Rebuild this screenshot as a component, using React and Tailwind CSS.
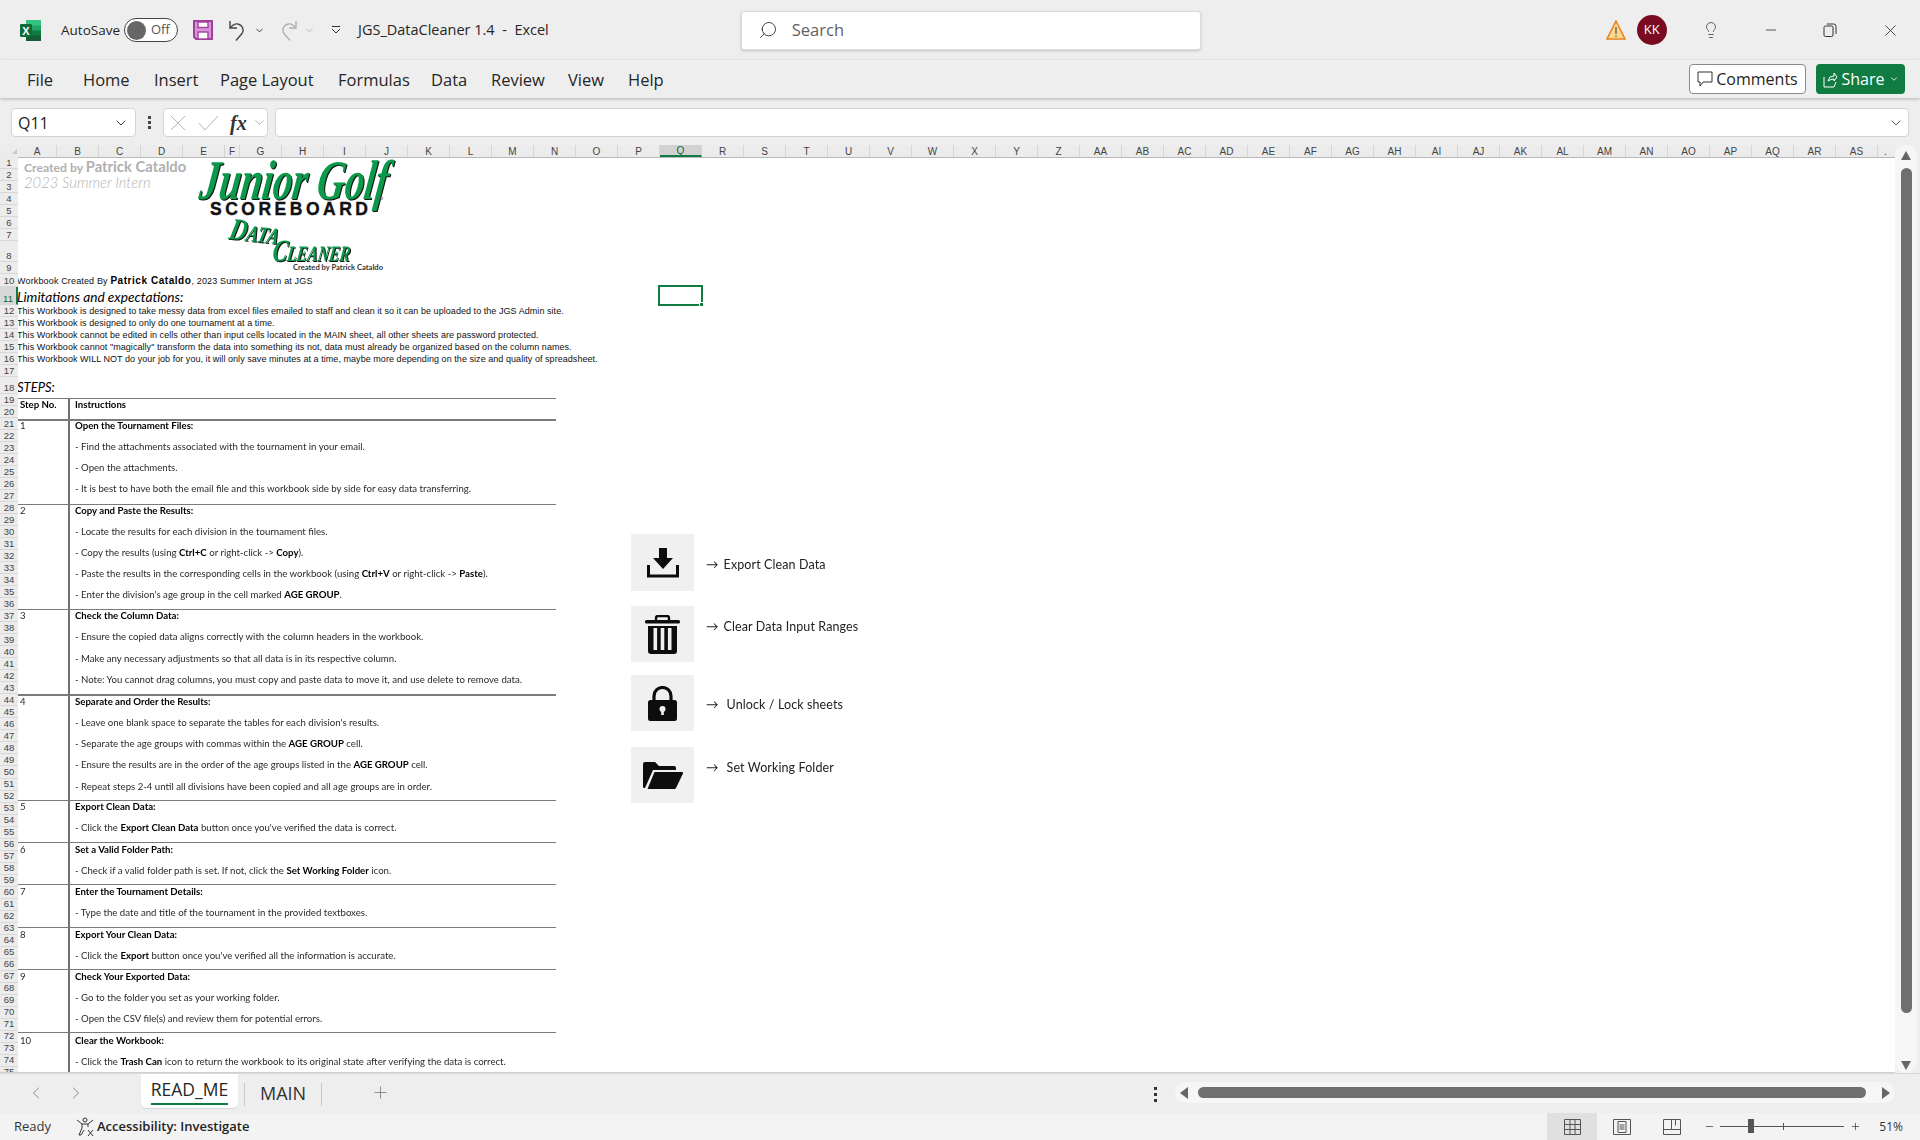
import { Search, ChevronDown, ChevronLeft, ChevronRight, X, Lightbulb, Minus, Plus } from "lucide-react";

const ui = "font-['Open_Sans',sans-serif]";

const tabs = [
  ["File", "w-[56px]"],
  ["Home", "w-[71px]"],
  ["Insert", "w-[66px]"],
  ["Page Layout", "w-[118px]"],
  ["Formulas", "w-[93px]"],
  ["Data", "w-[60px]"],
  ["Review", "w-[77px]"],
  ["View", "w-[60px]"],
  ["Help", "w-[60px]"],
];

const letters = "ABCDEFGHIJKLMNOPQRSTUVWXYZ".split("");
const columns = [
  ...letters,
  ...letters.slice(0, 19).map((l) => "A" + l),
];

const rowHeight = (n) => {
  if (n === 8) return "h-[21px]";
  if (n === 10) return "h-[13px]";
  if (n === 11) return "h-[18px]";
  if (n === 18) return "h-[17px]";
  if (n > 18) return "h-[12.03px]";
  return "h-[12px]";
};

const limits = [
  "This Workbook is designed to take messy data from excel files emailed to staff and clean it so it can be uploaded to the JGS Admin site.",
  "This Workbook is designed to only do one tournament at a time.",
  "This Workbook cannot be edited in cells other than input cells located in the MAIN sheet, all other sheets are password protected.",
  'This Workbook cannot "magically" transform the data into something its not, data must already be organized based on the column names.',
  "This Workbook WILL NOT do your job for you, it will only save minutes at a time, maybe more depending on the size and quality of spreadsheet.",
];

const B = ({ children }) => <b className="font-bold text-black">{children}</b>;

const steps = [
  {
    no: 1,
    h: "h-[84.6px]",
    border: "border-t-2",
    shift: "-translate-y-[2px]",
    lines: [
      <B>Open the Tournament Files:</B>,
      "- Find the attachments associated with the tournament in your email.",
      "- Open the attachments.",
      "- It is best to have both the email file and this workbook side by side for easy data transferring.",
    ],
  },
  {
    no: 2,
    h: "h-[105.75px]",
    border: "border-t",
    shift: "-translate-y-[1px]",
    lines: [
      <B>Copy and Paste the Results:</B>,
      "- Locate the results for each division in the tournament files.",
      <>- Copy the results (using <B>Ctrl+C</B> or right-click -&gt; <B>Copy</B>).</>,
      <>- Paste the results in the corresponding cells in the workbook (using <B>Ctrl+V</B> or right-click -&gt; <B>Paste</B>).</>,
      <>- Enter the division's age group in the cell marked <B>AGE GROUP</B>.</>,
    ],
  },
  {
    no: 3,
    h: "h-[84.6px]",
    border: "border-t",
    shift: "-translate-y-[1px]",
    lines: [
      <B>Check the Column Data:</B>,
      "- Ensure the copied data aligns correctly with the column headers in the workbook.",
      "- Make any necessary adjustments so that all data is in its respective column.",
      "- Note: You cannot drag columns, you must copy and paste data to move it, and use delete to remove data.",
    ],
  },
  {
    no: 4,
    h: "h-[105.75px]",
    border: "border-t-2",
    shift: "-translate-y-[1px]",
    lines: [
      <B>Separate and Order the Results:</B>,
      "- Leave one blank space to separate the tables for each division's results.",
      <>- Separate the age groups with commas within the <B>AGE GROUP</B> cell.</>,
      <>- Ensure the results are in the order of the age groups listed in the <B>AGE GROUP</B> cell.</>,
      "- Repeat steps 2-4 until all divisions have been copied and all age groups are in order.",
    ],
  },
  {
    no: 5,
    h: "h-[42.3px]",
    border: "border-t",
    shift: "-translate-y-[1px]",
    lines: [
      <B>Export Clean Data:</B>,
      <>- Click the <B>Export Clean Data</B> button once you've verified the data is correct.</>,
    ],
  },
  {
    no: 6,
    h: "h-[42.3px]",
    border: "border-t",
    shift: "",
    lines: [
      <B>Set a Valid Folder Path:</B>,
      <>- Check if a valid folder path is set. If not, click the <B>Set Working Folder</B> icon.</>,
    ],
  },
  {
    no: 7,
    h: "h-[42.3px]",
    border: "border-t",
    shift: "",
    lines: [
      <B>Enter the Tournament Details:</B>,
      "- Type the date and title of the tournament in the provided textboxes.",
    ],
  },
  {
    no: 8,
    h: "h-[42.3px]",
    border: "border-t",
    shift: "",
    lines: [
      <B>Export Your Clean Data:</B>,
      <>- Click the <B>Export</B> button once you've verified all the information is accurate.</>,
    ],
  },
  {
    no: 9,
    h: "h-[63.45px]",
    border: "border-t",
    shift: "",
    lines: [
      <B>Check Your Exported Data:</B>,
      "- Go to the folder you set as your working folder.",
      "- Open the CSV file(s) and review them for potential errors.",
    ],
  },
  {
    no: 10,
    h: "h-[63.45px]",
    border: "border-t",
    shift: "translate-y-[1px]",
    lines: [
      <B>Clear the Workbook:</B>,
      <>- Click the <B>Trash Can</B> icon to return the workbook to its original state after verifying the data is correct.</>,
    ],
  },
];

function ExcelIcon() {
  return (
    <svg width="21" height="21" viewBox="0 0 21 21">
      <rect x="6" y="0" width="15" height="6" fill="#33c481" />
      <rect x="6" y="5.5" width="15" height="5.5" fill="#21a366" />
      <rect x="6" y="10.5" width="15" height="5.5" fill="#107c41" />
      <rect x="6" y="15.5" width="15" height="5.5" fill="#185c37" />
      <rect x="0" y="4" width="12" height="13" rx="1" fill="#0f6b3a" />
      <text x="6" y="14.5" textAnchor="middle" fontSize="11" fontWeight="700" fill="#fff" fontFamily="Liberation Sans">X</text>
    </svg>
  );
}

function SaveIcon() {
  return (
    <svg width="20" height="20" viewBox="0 0 20 20">
      <path d="M1 1h18v18H3l-2-2z" fill="#d896d8" stroke="#a33ea1" strokeWidth="2" />
      <rect x="5" y="2" width="10" height="5.5" fill="#fff" stroke="#a33ea1" strokeWidth="1.4" />
      <rect x="5" y="12" width="10" height="7" fill="#fff" stroke="#a33ea1" strokeWidth="1.4" />
    </svg>
  );
}

function UndoIcon({ color, flip }) {
  return (
    <svg width="20" height="21" viewBox="0 0 20 21" className={flip ? "-scale-x-100" : ""} fill="none" stroke={color} strokeWidth="1.4">
      <path d="M2 1v7h7" />
      <path d="M2 8c3-3.5 5.5-4.5 8-4 4.5 1 6.5 6 4 9.5L8 20.5" />
    </svg>
  );
}

function ExportIcon() {
  return (
    <svg width="32" height="30" viewBox="0 0 32 30">
      <path d="M12 0h8v10h6L16 21 6 10h6z" fill="#0d0d0d" />
      <path d="M1.5 17v11h29V17" fill="none" stroke="#0d0d0d" strokeWidth="3" />
    </svg>
  );
}

function TrashIcon() {
  return (
    <svg width="35" height="39" viewBox="0 0 35 39">
      <path d="M11 6V3a2 2 0 0 1 2-2h9a2 2 0 0 1 2 2v3" fill="none" stroke="#0d0d0d" strokeWidth="2.4" />
      <rect x="0" y="5" width="35" height="3.5" rx="1.5" fill="#0d0d0d" />
      <path d="M3 11h29v25a3 3 0 0 1-3 3H6a3 3 0 0 1-3-3z" fill="#0d0d0d" />
      <rect x="8.5" y="13" width="3.6" height="22" fill="#f0f0f0" />
      <rect x="15.7" y="13" width="3.6" height="22" fill="#f0f0f0" />
      <rect x="22.9" y="13" width="3.6" height="22" fill="#f0f0f0" />
    </svg>
  );
}

function LockIcon() {
  return (
    <svg width="29" height="35" viewBox="0 0 29 35">
      <path d="M6 15V10a8.500 8.500 0 0 1 17 0v5" fill="none" stroke="#0d0d0d" strokeWidth="3.2" />
      <rect x="0" y="14" width="29" height="21" rx="2.500" fill="#0d0d0d" />
      <circle cx="14.500" cy="23" r="3" fill="#f0f0f0" />
      <rect x="13.200" y="24" width="2.600" height="5" fill="#f0f0f0" />
    </svg>
  );
}

function FolderIcon() {
  return (
    <svg width="40" height="27" viewBox="0 0 40 27">
      <path d="M0 2a2 2 0 0 1 2-2h10l4 4h15a2 2 0 0 1 2 2v2H10L2 26H1a1 1 0 0 1-1-1z" fill="#0d0d0d" />
      <path d="M11.500 10H39a1 1 0 0 1 1 1.500L33 26a2 2 0 0 1-2 1H4.500z" fill="#0d0d0d" />
    </svg>
  );
}

// brush lettering has no installed match, so a slanted serif stands in for it
function Logo() {
  return (
    <svg width="210" height="117" viewBox="0 0 210 117" className="shrink-0">
      <g fontFamily="Liberation Serif" fontWeight="700" fontStyle="italic" fill="#0b9a4b" className="drop-shadow-[1px_1px_0_#151515]">
        <g transform="skewX(-8)">
          <text x="14" y="42" fontSize="56" textLength="188" lengthAdjust="spacingAndGlyphs">Junior Golf</text>
        </g>
        <g transform="rotate(6 60 78) skewX(-8)">
          <text x="50" y="84" fontSize="31" textLength="50" lengthAdjust="spacingAndGlyphs">
            D<tspan fontSize="23">ATA</tspan>
          </text>
        </g>
        <g transform="skewX(-8)">
          <text x="96" y="104" fontSize="31" textLength="78" lengthAdjust="spacingAndGlyphs">
            C<tspan fontSize="22">LEANER</tspan>
          </text>
        </g>
      </g>
      <text x="20" y="58" fontFamily="Liberation Sans" fontWeight="700" fontSize="17.500" textLength="158" lengthAdjust="spacing" fill="#111" stroke="#111" strokeWidth="0.4">SCOREBOARD</text>
      <text x="187" y="43" fontFamily="Liberation Sans" fontSize="4" fill="#555">SM</text>
      <text x="103" y="113" fontFamily="Lato" fontWeight="700" fontSize="7.500" textLength="90" lengthAdjust="spacingAndGlyphs" fill="#333">Created by Patrick Cataldo</text>
    </svg>
  );
}

const actions = [
  { icon: <ExportIcon />, label: "Export Clean Data", box: "h-[57px]", gap: "mt-0", pad: "pt-[23px]", ml: "ml-[5px]" },
  { icon: <TrashIcon />, label: "Clear Data Input Ranges", box: "h-[56px]", gap: "mt-[15px]", pad: "pt-[13px]", ml: "ml-[5px]" },
  { icon: <LockIcon />, label: "Unlock / Lock sheets", box: "h-[56px]", gap: "mt-[13px]", pad: "pt-[22px]", ml: "ml-[8px]" },
  { icon: <FolderIcon />, label: "Set Working Folder", box: "h-[56px]", gap: "mt-[16px]", pad: "pt-[13px]", ml: "ml-[8px]" },
];

function TitleBar() {
  return (
    <div className="flex h-[60px] shrink-0 items-center text-[#262626]">
      <div className="ml-[20px] w-[41px]">
        <ExcelIcon />
      </div>
      <span className="w-[63px] text-[13.5px]">AutoSave</span>
      <div className="flex h-[24px] w-[54px] items-center rounded-full border border-[#444] bg-white pl-[2px]">
        <span className="h-[19px] w-[19px] rounded-full bg-[#666]" />
        <span className="ml-[5px] text-[13px] text-[#555]">Off</span>
      </div>
      <div className="ml-[15px]">
        <SaveIcon />
      </div>
      <div className="ml-[15px]">
        <UndoIcon color="#444" />
      </div>
      <ChevronDown size={11} strokeWidth={2} className="ml-[6px] text-[#333]" />
      <div className="ml-[13px]">
        <UndoIcon color="#b0b0b0" flip />
      </div>
      <ChevronDown size={11} strokeWidth={2} className="ml-[6px] text-[#b0b0b0]" />
      <svg width="10" height="8" viewBox="0 0 10 8" className="ml-[16px]" fill="none" stroke="#333" strokeWidth="1">
        <path d="M1 .5h8M1 3l4 4 4-4" />
      </svg>
      <span className="ml-[17px] whitespace-pre text-[14.5px]">JGS_DataCleaner 1.4  -  Excel</span>
      <div className="ml-[192px] flex h-[39px] w-[460px] items-center rounded-[3px] border border-[#dcdcdc] bg-white pl-[16px] shadow-[0_1px_3px_#00000030]">
        <Search size={20} strokeWidth={1.2} className="-scale-x-100 text-[#444]" />
        <span className="ml-[14px] text-[16.5px] text-[#616161]">Search</span>
      </div>
      <svg width="20" height="20" viewBox="0 0 20 20" className="ml-[405px]">
        <path d="M10 1l9 18H1z" fill="#fcd98f" stroke="#e8821e" strokeWidth="1.5" />
        <path d="M10 7v7M10 15.500v1.500" stroke="#333" strokeWidth="1" />
      </svg>
      <div className="ml-[11px] flex h-[30px] w-[30px] items-center justify-center rounded-full bg-[#790a20] text-[13px] text-white">KK</div>
      <Lightbulb size={18} strokeWidth={1} className="ml-[35px] text-[#333]" />
      <Minus size={16} strokeWidth={1.2} className="ml-[43px] text-[#333]" />
      <svg width="14" height="14" viewBox="0 0 14 14" className="ml-[44px]" fill="none" stroke="#333" strokeWidth="1">
        <rect x="1" y="3" width="9" height="10.500" rx="1.500" />
        <path d="M4 1h6.500a2.500 2.500 0 0 1 2.500 2.500V11" />
      </svg>
      <X size={19} strokeWidth={1.1} className="ml-[44px] text-[#333]" />
    </div>
  );
}

function Ribbon() {
  return (
    <div className="relative z-10 flex h-[38px] shrink-0 items-center text-[16.5px] text-[#262626] shadow-[0_1px_3px_#00000040]">
      <div className="ml-[27px] flex pt-[2px]">
        {tabs.map(([t, w]) => (
          <span key={t} className={w + " whitespace-nowrap"}>{t}</span>
        ))}
      </div>
      <div className="ml-auto mr-[15px] flex items-center gap-[10px] text-[16px]">
        <div className="flex h-[30px] w-[117px] items-center justify-center gap-[3px] rounded-[4px] border border-[#8a8a8a] bg-white">
          <svg width="16" height="17" viewBox="0 0 16 17" fill="none" stroke="#333" strokeWidth="1">
            <path d="M1 1h14v10H6l-3 4v-4H1z" />
          </svg>
          <span>Comments</span>
        </div>
        <div className="flex h-[30px] w-[89px] items-center justify-center gap-[4px] rounded-[4px] bg-[#107c41] text-white">
          <svg width="15" height="17" viewBox="0 0 15 17" fill="none" stroke="#fff" strokeWidth="1">
            <path d="M1 6v10h10l2-5M5 10l2-4 4-1V2l3 4-3 4V8l-3 .5z" />
          </svg>
          <span>Share</span>
          <ChevronDown size={10} strokeWidth={2} />
        </div>
      </div>
    </div>
  );
}

function FormulaBar() {
  return (
    <div className="flex h-[47px] shrink-0 pl-[11px] pt-[10px]">
      <div className="flex h-[29px] w-[125px] items-center justify-between rounded-[4px] border border-[#d4d4d4] bg-white pl-[6px] pr-[6px] text-[16px] text-[#222]">
        Q11
        <ChevronDown size={16} strokeWidth={1.3} />
      </div>
      <div className="flex h-[29px] w-[27px] flex-col items-center justify-center gap-[2px]">
        <span className="h-[3px] w-[3px] bg-[#444]" />
        <span className="h-[3px] w-[3px] bg-[#444]" />
        <span className="h-[3px] w-[3px] bg-[#444]" />
      </div>
      <div className="flex h-[29px] w-[105px] items-center rounded-[4px] border border-[#d4d4d4] bg-white pl-[6px]">
        <svg width="16" height="16" viewBox="0 0 16 16" fill="none" stroke="#b5b5b5" strokeWidth="1">
          <path d="M1 1l14 14M15 1L1 15" />
        </svg>
        <svg width="21" height="16" viewBox="0 0 21 16" className="ml-[12px]" fill="none" stroke="#b5b5b5" strokeWidth="1">
          <path d="M1 8l6 7L20 1" />
        </svg>
        <span className="ml-[11px] font-['Liberation_Serif',serif] text-[20px] font-bold italic text-[#333]">fx</span>
        <ChevronDown size={15} strokeWidth={1} className="ml-[5px] text-[#888]" />
      </div>
      <div className="ml-[7px] flex h-[29px] w-[1634px] items-center justify-end rounded-[4px] border border-[#d4d4d4] bg-white pr-[4px]">
        <ChevronDown size={16} strokeWidth={1.2} className="text-[#333]" />
      </div>
    </div>
  );
}

function ColumnHeader() {
  return (
    <div className="flex h-[12px] shrink-0 items-center bg-[#ececec] font-['Liberation_Sans',sans-serif] text-[10px] text-[#444]">
      <div className="flex h-full w-[18px] items-center justify-end pr-[1px]">
        <span className="h-0 w-0 border-b-[5px] border-l-[5px] border-b-[#c8c8c8] border-l-transparent" />
      </div>
      {columns.map((c, i) => (
        <div
          key={c}
          className={
            "flex h-full shrink-0 items-center justify-center border-r border-[#d4d4d4] " +
            (i === 0 ? "w-[39px] " : i === 5 ? "w-[15px] " : "w-[42px] ") +
            (c === "Q" ? "border-b-2 border-b-[#107c41] bg-[#d2d2d2] text-[#0e6b37]" : "")
          }
        >
          {c}
        </div>
      ))}
      <div className="w-[15px] text-center">.</div>
    </div>
  );
}

function RowHeader() {
  const rows = Array.from({ length: 75 }, (_, i) => i + 1);
  return (
    <div className="w-[18px] shrink-0 overflow-hidden bg-[#ececec] font-['Liberation_Sans',sans-serif] text-[9.500px] leading-none text-[#444]">
      {rows.map((n) => (
        <div
          key={n}
          className={
            "flex items-end justify-center border-b border-[#d8d8d8] pb-[1px] " +
            rowHeight(n) +
            (n === 11 ? " border-r-2 border-r-[#107c41] bg-[#d8d8d8] text-[#0e6b37]" : "")
          }
        >
          {n}
        </div>
      ))}
    </div>
  );
}

function Sheet() {
  return (
    <div className="relative flex-1 overflow-hidden border-t border-[#b8b8b8] bg-white">
      <div className="flex -mt-px">
        <div className="w-[613px] shrink-0">
          <div className="flex h-[117px]">
            <div className="w-[172px] whitespace-nowrap pl-[6px] pt-[2px]">
              <div className="font-['Lato',sans-serif] text-[12.200px] font-bold leading-[14px] text-[#b0b0b0]">
                Created by <span className="text-[14.800px]">Patrick Cataldo</span>
              </div>
              <div className="font-['Lato',sans-serif] text-[14.800px] font-light italic leading-[14px] text-[#b4b4b4]">
                2023 Summer Intern
              </div>
            </div>
            <Logo />
          </div>
          <div className="-ml-[1px] h-[13px] whitespace-nowrap font-['Liberation_Sans',sans-serif] text-[9px] leading-[13px] tracking-[0.15px] text-[#111]">
            Workbook Created By <b className="text-[10px] tracking-[0.55px] text-black">Patrick Cataldo</b>, 2023 Summer Intern at JGS
          </div>
          <div className="-ml-[1px] h-[18px] whitespace-nowrap font-['Lato',sans-serif] text-[13.700px] italic leading-[20px] text-black">
            Limitations and expectations:
          </div>
          {limits.map((t) => (
            <div key={t} className="-ml-[1px] h-[12px] whitespace-nowrap font-['Liberation_Sans',sans-serif] text-[9px] leading-[12px] tracking-[0.05px] text-[#111]">
              {t}
            </div>
          ))}
          <div className="h-[12px]" />
          <div className="-ml-[1px] h-[17px] font-['Lato',sans-serif] text-[13px] italic leading-[20px] text-black">STEPS:</div>
          <div className="mt-[4px] w-[538px] font-['Lato',sans-serif] text-[9.650px] leading-[12px] text-[#2a2a2a] blur-[0.25px]">
            <div className="flex h-[21px] border-t border-[#7a7a7a] font-bold text-black">
              <div className="w-[52px] border-r-2 border-[#707070] pl-[2px]">
                <div className="-translate-y-[1px]">Step No.</div>
              </div>
              <div className="-translate-y-[1px] pl-[5px]">Instructions</div>
            </div>
            {steps.map((s) => (
              <div key={s.no} className={"flex border-[#7a7a7a] " + s.h + " " + s.border}>
                <div className="w-[52px] border-r-2 border-[#707070] pl-[2px]">
                  <div className={s.shift}>{s.no}</div>
                </div>
                <div className={"pl-[5px] " + s.shift}>
                  {s.lines.map((l, i) => (
                    <div key={i} className="h-[21.150px] whitespace-nowrap">{l}</div>
                  ))}
                </div>
              </div>
            ))}
          </div>
        </div>
        <div className="pt-[377px]">
          {actions.map((a) => (
            <div key={a.label} className={"flex " + a.gap}>
              <div className={"flex w-[63px] items-center justify-center bg-[#f0f0f0] " + a.box}>{a.icon}</div>
              <div className={"ml-[12px] font-['Lato',sans-serif] text-[12.500px] leading-[16px] tracking-[0.1px] text-[#222] blur-[0.25px] " + a.pad}>
                →<span className={a.ml}>{a.label}</span>
              </div>
            </div>
          ))}
        </div>
      </div>
      <div className="absolute left-[640px] top-[127px] h-[21px] w-[45px] border-2 border-[#107c41]">
        <span className="absolute -bottom-[3px] -right-[3px] h-[5px] w-[5px] border border-white bg-[#107c41]" />
      </div>
    </div>
  );
}

function VerticalScroll() {
  return (
    <div className="flex w-[22px] shrink-0 flex-col items-center rounded-full bg-[#f6f6f6] pb-[3px] pt-[6px]">
      <span className="h-0 w-0 border-x-[5px] border-b-[9px] border-x-transparent border-b-[#666]" />
      <div className="mt-[8px] h-[845px] w-[11px] rounded-full bg-[#6f6f6f]" />
      <div className="flex-1" />
      <span className="h-0 w-0 border-x-[5px] border-t-[9px] border-x-transparent border-t-[#666]" />
    </div>
  );
}

function SheetTabs() {
  return (
    <div className="flex h-[40px] shrink-0 border-t border-[#d8d8d8] text-[#262626]">
      <ChevronLeft size={20} strokeWidth={1} className="ml-[26px] mt-[9px] text-[#777]" />
      <ChevronRight size={20} strokeWidth={1} className="ml-[20px] mt-[9px] text-[#777]" />
      <div className="ml-[55px] flex h-[34px] w-[97px] flex-col items-center rounded-b-[5px] bg-white pt-[2px] shadow-[0_1px_1px_#0000001a]">
        <span className="border-b-2 border-[#107c41] text-[17.500px] leading-[27px]">READ_ME</span>
      </div>
      <div className="ml-[6px] mt-[9px] h-[23px] w-px bg-[#c8c8c8]" />
      <span className="ml-[15px] mt-[6px] text-[18px] leading-[27px] text-[#333]">MAIN</span>
      <div className="ml-[15px] mt-[9px] h-[23px] w-px bg-[#c8c8c8]" />
      <Plus size={19} strokeWidth={1.2} className="ml-[49px] mt-[9px] text-[#888]" />
      <div className="ml-[764px] mt-[13px] flex flex-col gap-[3px]">
        <span className="h-[3px] w-[3px] bg-[#333]" />
        <span className="h-[3px] w-[3px] bg-[#333]" />
        <span className="h-[3px] w-[3px] bg-[#333]" />
      </div>
      <div className="ml-[18px] mt-[8px] flex h-[21px] w-[720px] items-center rounded-full bg-[#f6f6f6] pl-[5px] pr-[5px]">
        <span className="h-0 w-0 border-y-[6px] border-r-[8px] border-y-transparent border-r-[#666]" />
        <div className="ml-[10px] h-[11px] w-[668px] rounded-full bg-[#6f6f6f]" />
        <span className="ml-auto h-0 w-0 border-y-[6px] border-l-[8px] border-y-transparent border-l-[#666]" />
      </div>
    </div>
  );
}

function StatusBar() {
  return (
    <div className="flex h-[27px] shrink-0 items-center bg-[#f3f3f3] text-[13px] text-[#333]">
      <span className="ml-[14px]">Ready</span>
      <svg width="20" height="20" viewBox="0 0 20 20" className="ml-[25px]" fill="none" stroke="#333" strokeWidth="1">
        <circle cx="9" cy="3" r="2" />
        <path d="M1 3l5 4h6l5-4M6 7v4l-3 7h2l3-5M12 7v3M12 13l5 6M17 13l-5 6" />
      </svg>
      <span className="ml-[1px] font-semibold text-[#222]">Accessibility: Investigate</span>
      <div className="ml-auto flex h-full w-[50px] items-center justify-center bg-[#e0e0e0]">
        <svg width="17" height="16" viewBox="0 0 17 16" fill="none" stroke="#555" strokeWidth="1">
          <path d="M.5.500h16v15H.5zM.5 5.500h16M.5 10.500h16M6 .5v15M11 .5v15" />
        </svg>
      </div>
      <svg width="18" height="16" viewBox="0 0 18 16" className="ml-[16px]" fill="none" stroke="#555" strokeWidth="1">
        <path d="M.5.500h17v15H.5zM5 2.500h8v11H5zM6.500 6h5M6.500 8h5M6.500 10h5" />
      </svg>
      <svg width="18" height="16" viewBox="0 0 18 16" className="ml-[32px]" fill="none" stroke="#555" strokeWidth="1">
        <path d="M.5.500h17v15H.5zM.5 10.500h8v-10M8.500 10.500h9M12.500.5v6" />
      </svg>
      <Minus size={11} strokeWidth={1.5} className="ml-[23px] text-[#333]" />
      <div className="relative ml-[5px] h-px w-[124px] bg-[#555]">
        <span className="absolute -top-[7px] left-[28px] h-[14px] w-[6px] bg-[#555]" />
        <span className="absolute -top-[3px] left-[63px] h-[7px] w-px bg-[#555]" />
      </div>
      <Plus size={11} strokeWidth={1.5} className="ml-[6px] text-[#333]" />
      <span className="ml-[18px] mr-[17px] text-[12px]">51%</span>
    </div>
  );
}

export default function App() {
  return (
    <div className={"flex h-[1140px] w-[1920px] flex-col overflow-hidden bg-[#eeeeee] " + ui}>
      <TitleBar />
      <Ribbon />
      <FormulaBar />
      <div className="flex min-h-0 flex-1">
        <div className="flex w-[1895px] shrink-0 flex-col border-b border-[#d0d0d0]">
          <ColumnHeader />
          <div className="flex min-h-0 flex-1">
            <RowHeader />
            <Sheet />
          </div>
        </div>
        <VerticalScroll />
      </div>
      <SheetTabs />
      <StatusBar />
    </div>
  );
}
